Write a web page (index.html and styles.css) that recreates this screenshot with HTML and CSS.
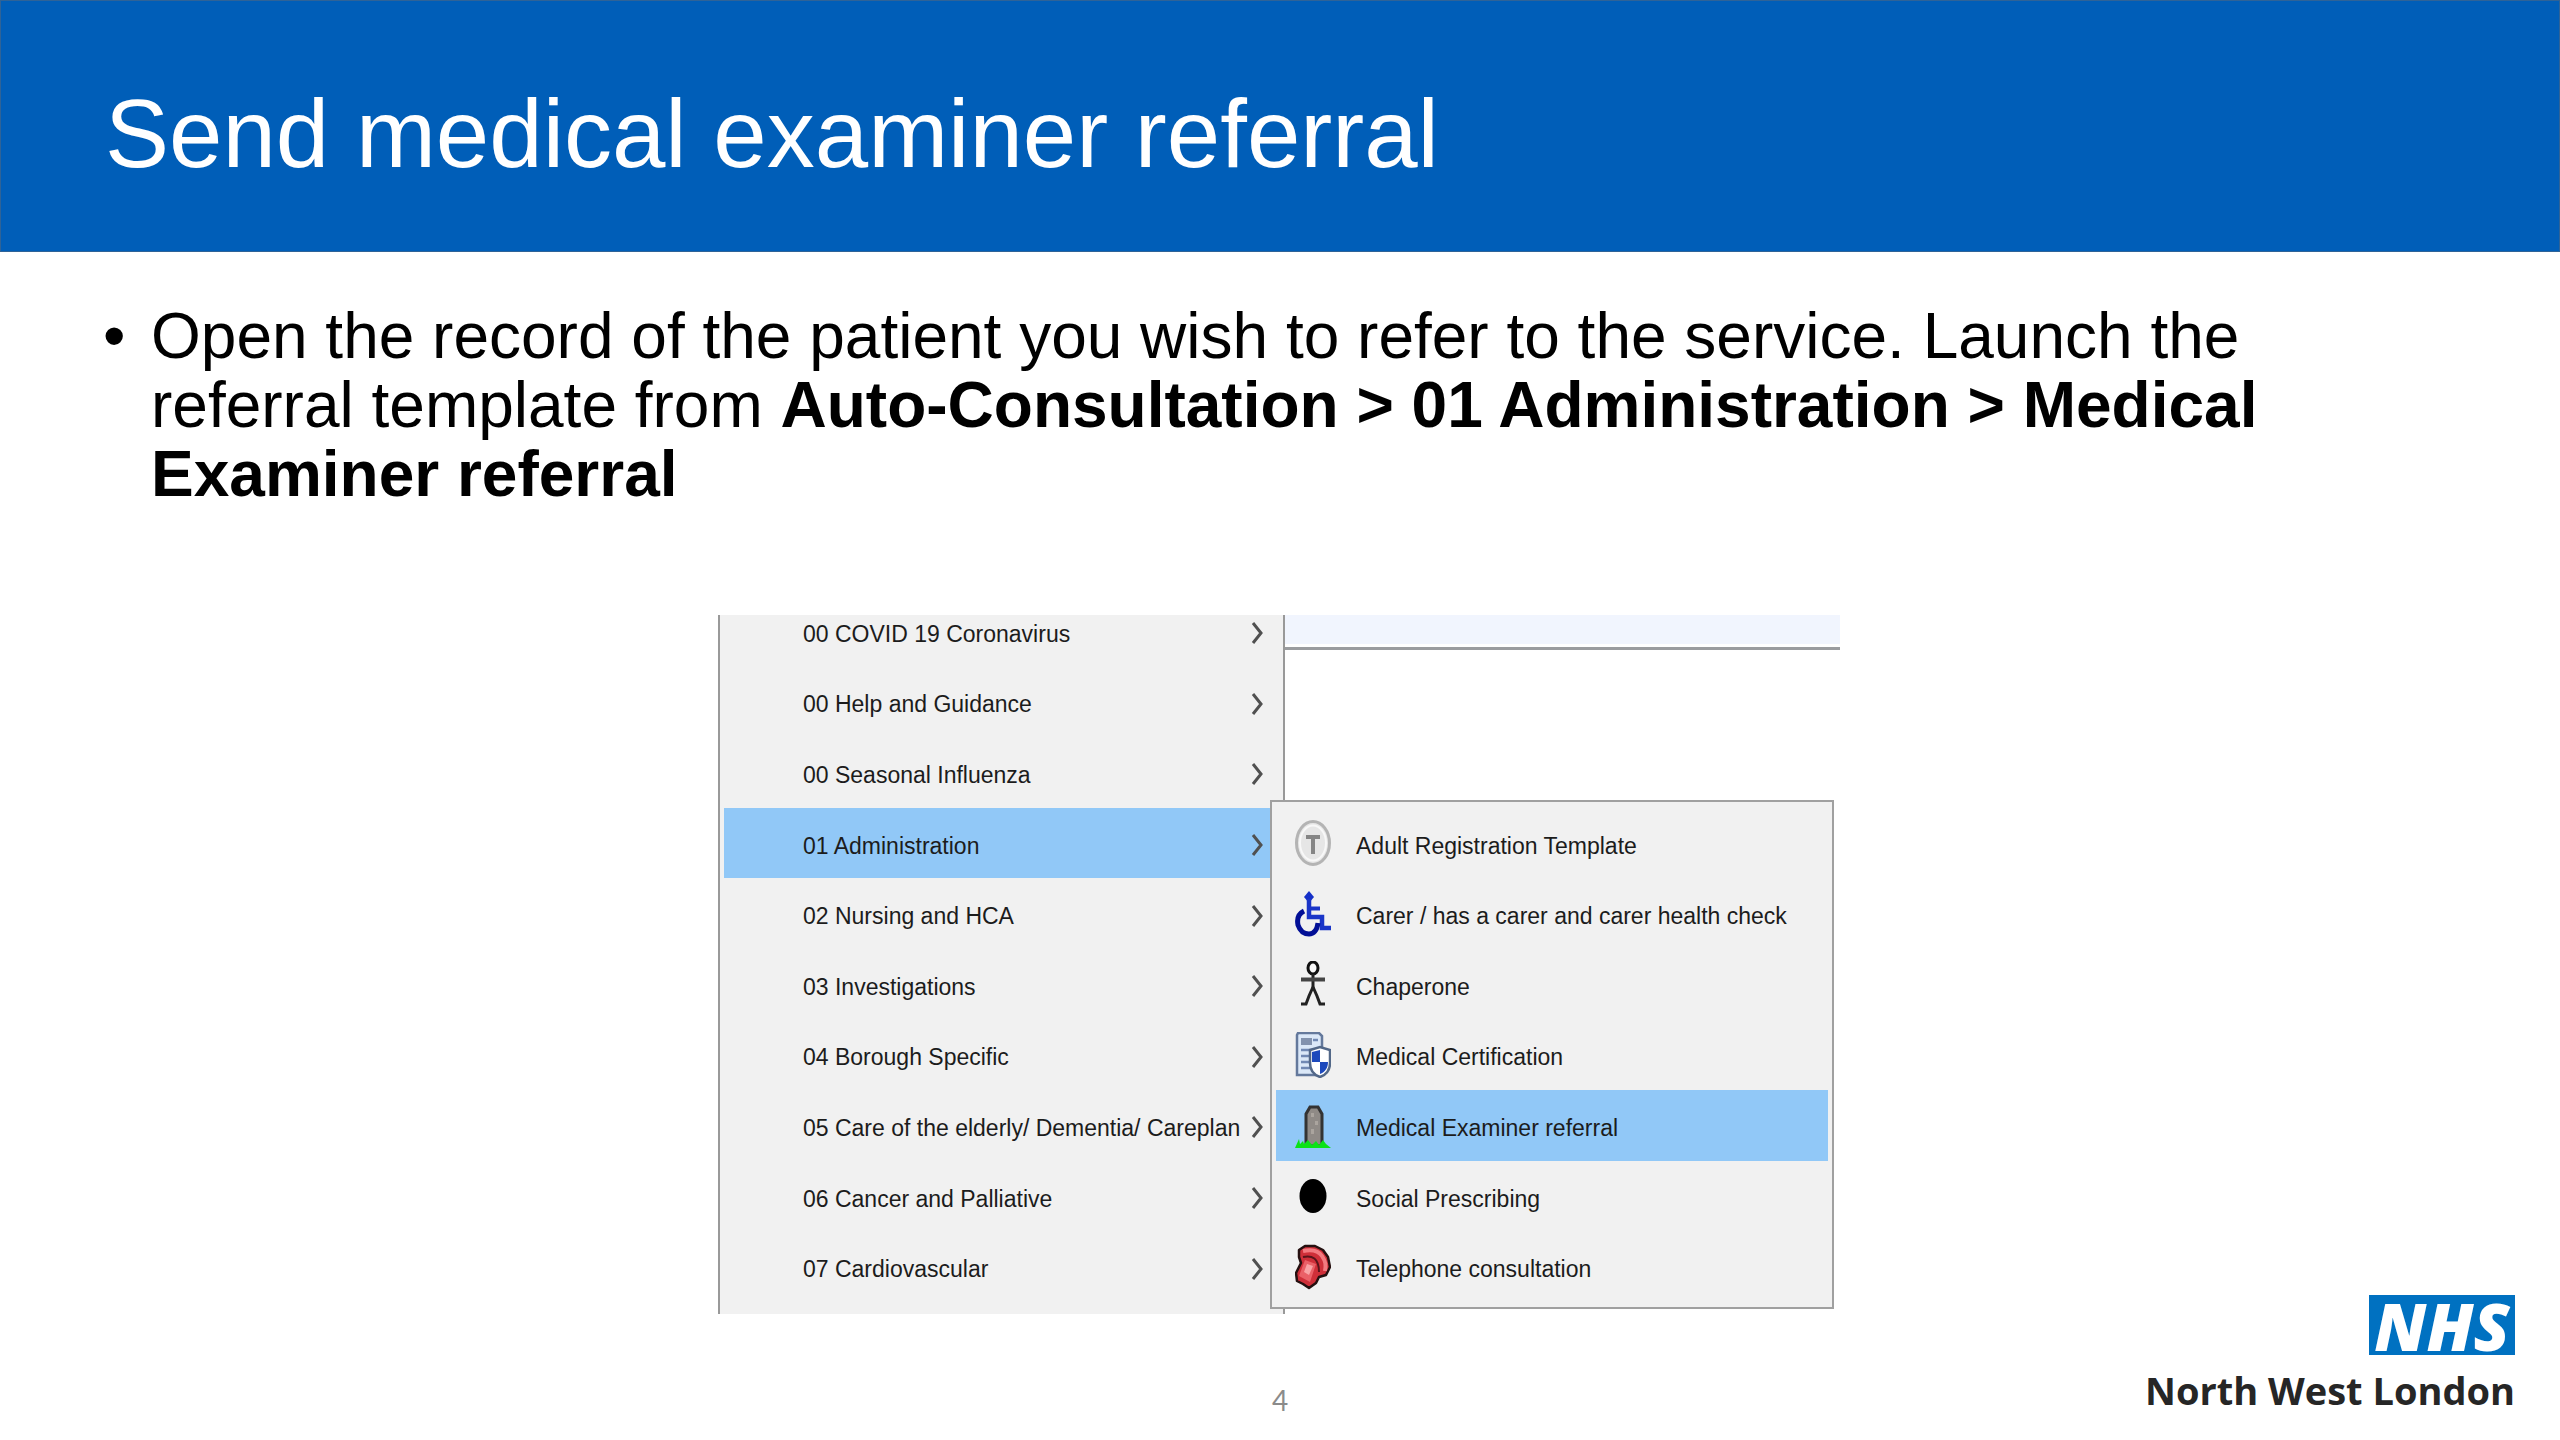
FILE: index.html
```html
<!DOCTYPE html>
<html lang="en">
<head>
<meta charset="utf-8">
<meta name="viewport" content="width=device-width, initial-scale=1">
<title>Send medical examiner referral</title>
<link rel="stylesheet" href="styles.css">
</head>
<body>
<article class="slide">
  <header class="banner">
    <h1 class="title">Send medical examiner referral</h1>
  </header>
  <ul class="points">
    <li class="point">Open the record of the patient you wish to refer to the service. Launch the referral template from <strong>Auto-Consultation &gt; 01 Administration &gt; Medical Examiner referral</strong></li>
  </ul>
  <div class="stage">
    <figure class="shot">
      <nav class="menu" aria-label="Auto-Consultation">
        <ul class="menu-list">
          <li><button class="item" type="button">00 COVID 19 Coronavirus<svg class="chevron" viewBox="0 0 12 22"><path d="M2 1l8 10-8 10"/></svg></button></li>
          <li><button class="item" type="button">00 Help and Guidance<svg class="chevron" viewBox="0 0 12 22"><path d="M2 1l8 10-8 10"/></svg></button></li>
          <li><button class="item" type="button">00 Seasonal Influenza<svg class="chevron" viewBox="0 0 12 22"><path d="M2 1l8 10-8 10"/></svg></button></li>
          <li><button class="item item-active" type="button">01 Administration<svg class="chevron" viewBox="0 0 12 22"><path d="M2 1l8 10-8 10"/></svg></button></li>
          <li><button class="item" type="button">02 Nursing and HCA<svg class="chevron" viewBox="0 0 12 22"><path d="M2 1l8 10-8 10"/></svg></button></li>
          <li><button class="item" type="button">03 Investigations<svg class="chevron" viewBox="0 0 12 22"><path d="M2 1l8 10-8 10"/></svg></button></li>
          <li><button class="item" type="button">04 Borough Specific<svg class="chevron" viewBox="0 0 12 22"><path d="M2 1l8 10-8 10"/></svg></button></li>
          <li><button class="item" type="button">05 Care of the elderly/ Dementia/ Careplan<svg class="chevron" viewBox="0 0 12 22"><path d="M2 1l8 10-8 10"/></svg></button></li>
          <li><button class="item" type="button">06 Cancer and Palliative<svg class="chevron" viewBox="0 0 12 22"><path d="M2 1l8 10-8 10"/></svg></button></li>
          <li><button class="item" type="button">07 Cardiovascular<svg class="chevron" viewBox="0 0 12 22"><path d="M2 1l8 10-8 10"/></svg></button></li>
        </ul>
      </nav>
      <div class="toolbar"></div>
      <nav class="submenu" aria-label="01 Administration">
        <ul class="submenu-list">
          <li><button class="item item-sub" type="button">
            <svg class="icon" viewBox="0 0 36 46"><ellipse cx="18" cy="23" rx="16.5" ry="21.5" fill="#e6e6e6" stroke="#b4b4b4" stroke-width="3"/><ellipse cx="18" cy="23" rx="13" ry="17.5" fill="none" stroke="#f8f8f8" stroke-width="2"/><path d="M11 17h14M18 17v17" stroke="#858585" stroke-width="4" fill="none"/></svg>
            Adult Registration Template</button></li>
          <li><button class="item item-sub" type="button">
            <svg class="icon" viewBox="0 0 36 46"><path d="M14 0l5 6-5 6-5-6z" fill="#1530c8"/><path d="M14 8v18h13v11h9" fill="none" stroke="#1a35c8" stroke-width="4.5"/><path d="M14 17.500h11" stroke="#1a35c8" stroke-width="4"/><path d="M9 20C3 23 2 29 3 34c2 6 6 9 11 9 5 0 8-4 9-11" fill="none" stroke="#020f96" stroke-width="5"/></svg>
            Carer / has a carer and carer health check</button></li>
          <li><button class="item item-sub" type="button">
            <svg class="icon" viewBox="0 0 36 46"><ellipse cx="18" cy="7" rx="5" ry="6" fill="#f8f8f8" stroke="#111" stroke-width="3"/><path d="M18 13v14" stroke="#222" stroke-width="3"/><path d="M6 18.500h24" stroke="#444" stroke-width="4"/><path d="M18 26l-4 9-3 8H6M18 26l4 9 3 8h5" fill="none" stroke="#222" stroke-width="3"/></svg>
            Chaperone</button></li>
          <li><button class="item item-sub" type="button">
            <svg class="icon" viewBox="0 0 36 46"><path d="M3 1h21l3 3v39H2V3z" fill="#dbe8f8" stroke="#64799c" stroke-width="2.500"/><path d="M6 6h11v7H6z" fill="#8292ae"/><path d="M18 8h5M6 18h12M6 24h9M6 30h9M6 36h9" stroke="#7189b4" stroke-width="2.500"/><path d="M15 18l10-3 10 3v13c0 7-4 12-10 14-6-2-10-7-10-14z" fill="#fff" stroke="#536888" stroke-width="2.500"/><path d="M17 20l8-2v12h-8zM25 30h8c0 6-3 10-8 12z" fill="#1d49bc"/></svg>
            Medical Certification</button></li>
          <li><button class="item item-sub item-active" type="button">
            <svg class="icon" viewBox="0 0 36 46"><path d="M11 43V11l4-7h8l4 7v32z" fill="#8f8a86" stroke="#333" stroke-width="3"/><path d="M16 10h3v4h-3zM20 18h3v4h-3zM16 26h3v5h-3z" fill="#aaa49e"/><path d="M0 45l4-9 1 5 3-3 1 3 4-4 4 5 4-4 3 4 4-5 3 4 5 4z" fill="#0be217"/></svg>
            Medical Examiner referral</button></li>
          <li><button class="item item-sub" type="button">
            <svg class="icon" viewBox="0 0 36 46"><ellipse cx="18" cy="23" rx="13.500" ry="17" fill="#000"/></svg>
            Social Prescribing</button></li>
          <li><button class="item item-sub" type="button">
            <svg class="icon" viewBox="0 0 36 46"><path d="M4 6l6-4h10l8 4 5 7 2 10-4 8-7 2-3 6-7 5-6-4-6-3-1-8 5-10-2-6z" fill="#cf2f39" stroke="#251010" stroke-width="2.500" stroke-linejoin="round"/><path d="M8 7c9-2 15-1 19 5 4 6 4 9 3 15" fill="none" stroke="#f37a80" stroke-width="4"/><path d="M8 13c9-2 16 1 16 15" fill="none" stroke="#59141a" stroke-width="2"/><path d="M10 16l11 4-6 18-11-6z" fill="#ea6067"/><path d="M12 20l6 2-4 9-5-3z" fill="#f9a3a5"/></svg>
            Telephone consultation</button></li>
        </ul>
      </nav>
    </figure>
    <p class="page-number">4</p>
    <div class="brand">
      <span class="nhs">NHS</span>
      <span class="region">North West London</span>
    </div>
  </div>
</article>
</body>
</html>
```
FILE: styles.css
```css
* { box-sizing: border-box; }

body {
  margin: 0;
  background: #fff;
  color: #000;
  font-family: "Liberation Sans", Arial, sans-serif;
}

ul { margin: 0; padding: 0; list-style: none; }

.slide {
  display: flex;
  flex-direction: column;
  min-height: 100vh;
}

/* Title band */
.banner {
  padding: 79px 104px 63px;
  background: #005eb8;
  border: 1px solid #2f6397;
}

.title {
  margin: 0;
  color: #fff;
  font-size: 96px;
  font-weight: 400;
  line-height: 108px;
}

/* Instruction text */
.points { padding: 50px 240px 0 103px; }

.point {
  position: relative;
  padding-left: 48px;
  font-size: 64px;
  line-height: 69px;
}

.point::before {
  content: "•";
  position: absolute;
  left: 0;
}

/* Picture, page number and logo */
.stage {
  flex: 1;
  display: grid;
  grid-template-columns: 1fr auto 1fr;
  grid-template-rows: auto 1fr;
  padding-top: 106px;
}

.shot {
  grid-column: 2;
  position: relative;
  display: flex;
  align-items: flex-start;
  width: 1124px;
  margin: 0;
  padding-right: 2px;
}

.menu {
  width: 567px;
  height: 699px;
  overflow: hidden;
  padding: 0 4px;
  background: #f1f1f1;
  border: solid #999;
  border-width: 0 2px;
}

.menu-list,
.submenu-list {
  display: grid;
  grid-auto-rows: 1fr;
}

.menu-list {
  height: 706px;
  margin-top: -19px;
}

.toolbar {
  flex: 1;
  height: 35px;
  padding-bottom: 3px;
  background: #f1f5fe content-box;
  border-bottom: 3px solid #9a9c9f;
}

.submenu {
  position: absolute;
  left: 552px;
  top: 185px;
  width: 564px;
  padding: 6px 4px 5px;
  background: #f1f1f1;
  border: 2px solid #a0a0a0;
}

.submenu-list { height: 494px; }

.item {
  display: flex;
  align-items: center;
  width: 100%;
  height: 100%;
  padding: 6px 16px 0 79px;
  border: 0;
  background: none;
  color: #1c1c1c;
  font-family: "Liberation Sans", Arial, sans-serif;
  font-size: 23px;
  text-align: left;
  white-space: nowrap;
}

.item-sub {
  gap: 25px;
  padding: 6px 16px 0 19px;
}

.item-active { background: #91c8f7; }

.chevron {
  width: 12px;
  height: 22px;
  margin: 0 0 2px auto;
  fill: none;
  stroke: #505050;
  stroke-width: 3;
}

.icon {
  width: 36px;
  height: 46px;
  margin-bottom: 6px;
}

.page-number {
  grid-column: 2;
  align-self: end;
  margin: 0 0 24px;
  color: #8b8b8b;
  font-family: Lato, sans-serif;
  font-size: 28px;
  line-height: 32px;
  text-align: center;
}

.brand {
  grid-column: 3;
  grid-row: 1 / 3;
  align-self: end;
  justify-self: end;
  display: flex;
  flex-direction: column;
  align-items: flex-end;
  gap: 8px;
  padding: 0 45px 23px 0;
  font-family: "Open Sans", sans-serif;
}

.nhs {
  width: 146px;
  height: 60px;
  background: #0071c1;
  color: #fff;
  font-size: 66px;
  font-style: italic;
  font-weight: 800;
  line-height: 60px;
  text-align: center;
}

.region {
  color: #262626;
  font-size: 38px;
  font-weight: 700;
  line-height: 54px;
  white-space: nowrap;
}
```
